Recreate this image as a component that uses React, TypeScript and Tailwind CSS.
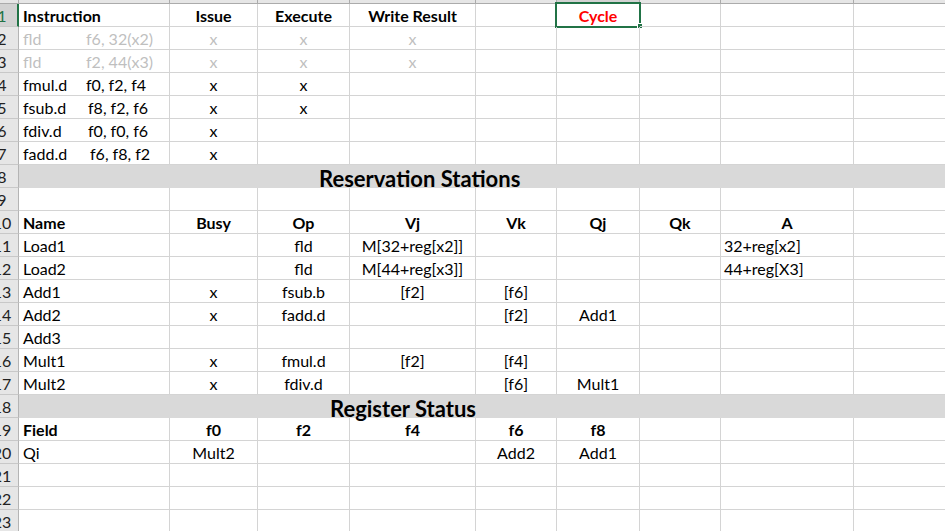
import React from 'react';

type Cell = { t?: string; c?: boolean; b?: boolean; g?: boolean; red?: boolean; pre?: [string, string, number] };

const COLS = ['w-[151px]', 'w-[88px]', 'w-[92px]', 'w-[126px]', 'w-[81px]', 'w-[83px]', 'w-[81px]', 'w-[133px]', 'w-[120px]'];

const E: Cell = {};
const x: Cell = { t: 'x', c: true };
const gx: Cell = { t: 'x', c: true, g: true };
const c = (t: string): Cell => ({ t, c: true });
const l = (t: string): Cell => ({ t });
const hc = (t: string): Cell => ({ t, c: true, b: true });

type Row = { n: number; cells?: Cell[]; band?: string; bandPad?: string };

const rows: Row[] = [
  { n: 1, cells: [{ t: 'Instruction', b: true }, hc('Issue'), hc('Execute'), hc('Write Result'), E, { t: 'Cycle', c: true, b: true, red: true }] },
  { n: 2, cells: [{ pre: ['fld', 'f6, 32(x2)', 63], g: true }, gx, gx, gx] },
  { n: 3, cells: [{ pre: ['fld', 'f2, 44(x3)', 63], g: true }, gx, gx, gx] },
  { n: 4, cells: [{ pre: ['fmul.d', 'f0, f2, f4', 63] }, x, x] },
  { n: 5, cells: [{ pre: ['fsub.d', 'f8, f2, f6', 65] }, x, x] },
  { n: 6, cells: [{ pre: ['fdiv.d', 'f0, f0, f6', 65] }, x] },
  { n: 7, cells: [{ pre: ['fadd.d', 'f6, f8, f2', 67] }, x] },
  { n: 8, band: 'Reservation Stations', bandPad: 'pl-[300px]' },
  { n: 9, cells: [] },
  { n: 10, cells: [{ t: 'Name', b: true }, hc('Busy'), hc('Op'), hc('Vj'), hc('Vk'), hc('Qj'), hc('Qk'), hc('A')] },
  { n: 11, cells: [l('Load1'), E, c('fld'), c('M[32+reg[x2]]'), E, E, E, l('32+reg[x2]')] },
  { n: 12, cells: [l('Load2'), E, c('fld'), c('M[44+reg[x3]]'), E, E, E, l('44+reg[X3]')] },
  { n: 13, cells: [l('Add1'), x, c('fsub.b'), c('[f2]'), c('[f6]')] },
  { n: 14, cells: [l('Add2'), x, c('fadd.d'), E, c('[f2]'), c('Add1')] },
  { n: 15, cells: [l('Add3')] },
  { n: 16, cells: [l('Mult1'), x, c('fmul.d'), c('[f2]'), c('[f4]')] },
  { n: 17, cells: [l('Mult2'), x, c('fdiv.d'), E, c('[f6]'), c('Mult1')] },
  { n: 18, band: 'Register Status', bandPad: 'pl-[311px]' },
  { n: 19, cells: [{ t: 'Field', b: true }, hc('f0'), hc('f2'), hc('f4'), hc('f6'), hc('f8')] },
  { n: 20, cells: [l('Qi'), c('Mult2'), E, E, c('Add2'), c('Add1')] },
  { n: 21, cells: [] },
  { n: 22, cells: [] },
  { n: 23, cells: [] },
];

function RowHeader({ n }: { n: number }) {
  const active = n === 1;
  return (
    <div
      className={`flex h-[23px] w-[19px] shrink-0 overflow-hidden border-b border-[#c8c8c8] ${
        active ? 'border-r-2 border-r-[#217346] bg-[#d2d2d2] text-[#217346]' : 'border-r border-r-[#b4b4b4] bg-[#e6e6e6] text-[#222]'
      }`}
    >
      <div className="-ml-[18px] w-[40px] shrink-0 pt-[1px] text-center leading-[22px]">{n}</div>
    </div>
  );
}

function GridCell({ cell, width, first }: { cell: Cell; width: string; first?: boolean }) {
  const color = cell.red ? 'text-[#ff0000]' : cell.g ? 'text-[#bfbfbf]' : 'text-black';
  return (
    <div
      className={`relative h-[23px] shrink-0 whitespace-nowrap border-b border-r border-[#d4d4d4] px-[3px] pt-[1px] leading-[22px] ${width} ${
        cell.c ? 'text-center' : 'text-left'
      } ${cell.b ? 'font-bold' : ''} ${color} ${first ? 'pl-[4px]' : ''}`}
    >
      {cell.pre ? (
        <>
          <span className="inline-block" style={{ width: cell.pre[2] }}>
            {cell.pre[0]}
          </span>
          <span>{cell.pre[1]}</span>
        </>
      ) : (
        cell.t
      )}
      {cell.red ? (
        <>
          <div className="pointer-events-none absolute -bottom-[2px] -left-[2px] -right-[2px] -top-[2px] border-2 border-[#217346]" />
          <div className="absolute -bottom-[3px] -right-[4px] h-[6px] w-[6px] border border-white bg-[#217346]" />
        </>
      ) : null}
    </div>
  );
}

export default function App() {
  return (
    <div className="h-[531px] w-[945px] overflow-hidden bg-white font-['Lato',sans-serif] text-[16px]">
      <div className="flex h-[4px] border-b border-[#ababab] bg-[#e6e6e6]">
        <div className="w-[19px] shrink-0 border-r border-[#ababab]" />
        {COLS.map((w, i) => (
          <div key={i} className={`${w} shrink-0 border-r border-[#ababab] ${i === 5 ? 'bg-[#d2d2d2]' : ''}`} />
        ))}
      </div>

      {rows.map((row) => (
        <div key={row.n} className="flex">
          <RowHeader n={row.n} />
          {row.band ? (
            <div className={`h-[23px] flex-1 whitespace-nowrap bg-[#d9d9d9] pt-[2px] text-[22px] font-bold leading-[23px] text-black ${row.bandPad}`}>
              {row.band}
            </div>
          ) : (
            COLS.map((w, i) => <GridCell key={i} cell={row.cells?.[i] ?? E} width={w} first={i === 0} />)
          )}
        </div>
      ))}
    </div>
  );
}
